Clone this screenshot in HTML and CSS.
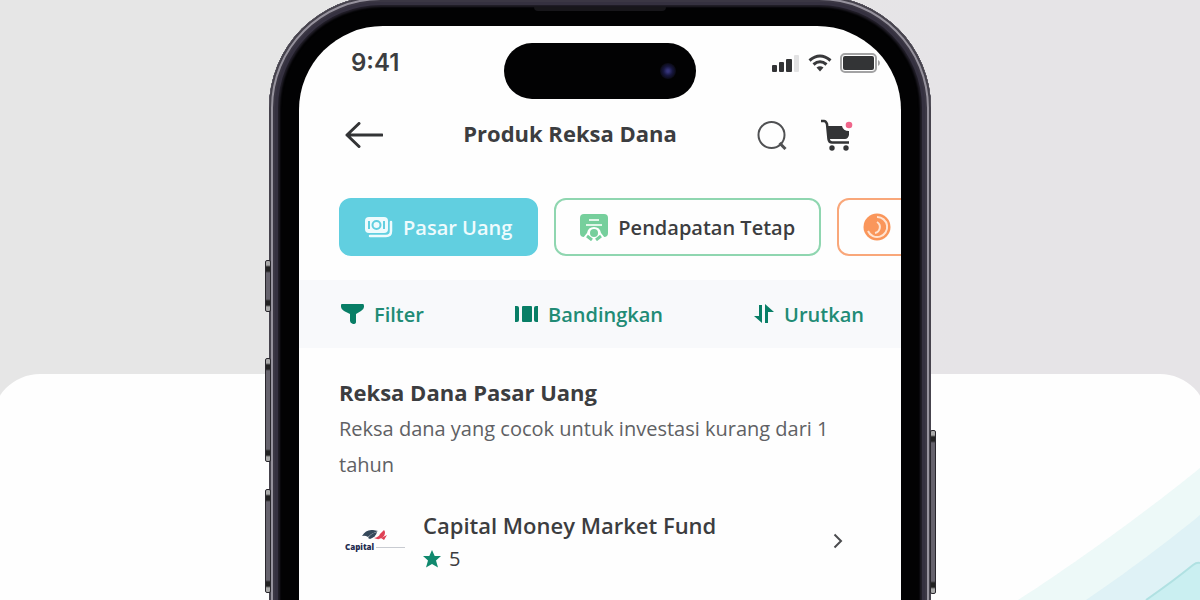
FILE: index.html
```html
<!DOCTYPE html>
<html lang="id">
<head>
  <meta charset="UTF-8">
  <meta name="viewport" content="width=device-width, initial-scale=1.0">
  <title>Produk Reksa Dana</title>
  <link rel="stylesheet" href="styles.css">
</head>
<body>
  <div class="hero">
    <!-- Background panel and waves -->
    <div class="panel"></div>
    <svg class="waves" width="190" height="140" viewBox="0 0 190 140" aria-hidden="true">
      <path d="M8 140C48 115 134 54 190 8V140Z" fill="#edf9f8"/>
      <path d="M76 140C112 116 165 76 190 55V140Z" fill="#dff2f6"/>
      <path d="M136 140Q162 122 183 105Q187 102 190 103V140Z" fill="#caeff1"/>
      <path d="M136 140Q162 122 183 105Q187 102 190 103" fill="none" stroke="#b0e1e2" stroke-width="2"/>
    </svg>

    <!-- Phone -->
    <div class="phone">
      <span class="side-button mute"></span>
      <span class="side-button volume-up"></span>
      <span class="side-button volume-down"></span>
      <span class="side-button power"></span>
      <span class="speaker"></span>

      <main class="screen">
        <div class="status-bar">
          <span class="time">9:41</span>
          <div class="island"><span class="camera"></span></div>
          <div class="status-icons">
            <svg width="28" height="18" viewBox="0 0 28 18" aria-hidden="true">
              <g fill="#333436">
                <rect x="0" y="11" width="5" height="7" rx="1"/>
                <rect x="7" y="8" width="5" height="10" rx="1"/>
                <rect x="14" y="5" width="6" height="13" rx="1"/>
              </g>
              <rect x="22" y="1" width="5" height="17" rx="1" fill="#e2e2e3"/>
            </svg>
            <svg width="24" height="18" viewBox="0 0 24 18" aria-hidden="true">
              <path d="M1.5 6.5Q12-2.5 22.5 6.5" fill="none" stroke="#38393b" stroke-width="3"/>
              <path d="M5.5 10.5Q12 5 18.5 10.5" fill="none" stroke="#38393b" stroke-width="3"/>
              <path d="M8.5 13.5Q12 11 15.5 13.5L12 17.5Z" fill="#38393b"/>
            </svg>
            <svg width="41" height="20" viewBox="0 0 41 20" aria-hidden="true">
              <rect x="1" y="1" width="35" height="18" rx="4" fill="#fff" stroke="#a3a3a4" stroke-width="2"/>
              <rect x="3" y="3" width="31" height="14" rx="2" fill="#333436"/>
              <path d="M38 7Q40 8 40 10T38 13Z" fill="#a3a3a4"/>
            </svg>
          </div>
        </div>

        <header class="app-bar">
          <button type="button" class="icon-button" aria-label="Kembali">
            <svg width="38" height="26" viewBox="0 0 38 26">
              <path d="M37 13H2M14 1.5L2 13L14 24.5" fill="none" stroke="#333436" stroke-width="3" stroke-linejoin="round" stroke-linecap="round"/>
            </svg>
          </button>
          <h1>Produk Reksa Dana</h1>
          <div class="actions">
            <button type="button" class="icon-button" aria-label="Cari">
              <svg width="30" height="30" viewBox="0 0 30 30">
                <circle cx="14.5" cy="15" r="13" fill="none" stroke="#505153" stroke-width="2"/>
                <path d="M22.5 23L28.5 29" stroke="#505153" stroke-width="3"/>
              </svg>
            </button>
            <button type="button" class="icon-button" aria-label="Keranjang">
              <svg width="32" height="32" viewBox="0 0 32 32">
                <path d="M0 2H3Q5 2 6 5L7.500 20Q8 23.500 11 23.500H28" fill="none" stroke="#333436" stroke-width="2.5"/>
                <path d="M6 7H21Q22 12 28 12V16Q27 20 24 20H8Z" fill="#333436"/>
                <circle cx="11" cy="29" r="2.7" fill="#333436"/>
                <circle cx="25" cy="29" r="2.7" fill="#333436"/>
                <circle cx="28" cy="6" r="3.3" fill="#f0668b"/>
              </svg>
            </button>
          </div>
        </header>

        <nav class="chips">
          <button type="button" class="chip active">
            <svg width="28" height="22" viewBox="0 0 28 22" aria-hidden="true">
              <path d="M26 6V15Q26 20 21 20H5" fill="none" stroke="#eefbfd" stroke-width="2.5" stroke-linecap="round"/>
              <rect x="0" y="1" width="23" height="16" rx="4" fill="#eefbfd"/>
              <circle cx="11.5" cy="9" r="4" fill="none" stroke="#61cfe0" stroke-width="2"/>
              <path d="M4 5V13M19 5V13" stroke="#61cfe0" stroke-width="2"/>
            </svg>
            Pasar Uang
          </button>
          <button type="button" class="chip green">
            <svg width="28" height="28" viewBox="0 0 28 28" aria-hidden="true">
              <path d="M4 1H24Q28 1 28 5V20Q28 24 24 24H4Q0 24 0 20V5Q0 1 4 1Z" fill="#76cf9c"/>
              <path d="M9 7H19M6 12H22" stroke="#e1f6e9" stroke-width="2"/>
              <path d="M14 14Q20 14 21 20L25 25L21 28H7L3 25L7 20Q8 14 14 14Z" fill="#fff"/>
              <circle cx="14" cy="20" r="4" fill="#76cf9c"/>
              <path d="M7 23L12 27M21 23L16 27" stroke="#76cf9c" stroke-width="3"/>
            </svg>
            Pendapatan Tetap
          </button>
          <button type="button" class="chip orange" aria-label="Campuran">
            <svg width="28" height="28" viewBox="0 0 28 28" aria-hidden="true">
              <circle cx="14" cy="14" r="13.5" fill="#fa965b"/>
              <path d="M14 4A10 10 0 1 1 5 18" fill="none" stroke="#ffe3d1" stroke-width="2"/>
              <path d="M14 9A6 6 0 0 1 12 20" fill="none" stroke="#ffe3d1" stroke-width="2"/>
            </svg>
            C
          </button>
        </nav>

        <div class="toolbar">
          <button type="button">
            <svg width="23" height="20" viewBox="0 0 23 20" aria-hidden="true">
              <path d="M1 0H22Q23 0 23 2V3Q23 5 20 7L15 10V18Q15 20 12 20Q9 19 9 17V10L3 7Q0 5 0 3V1Q0 0 1 0Z" fill="#087e66"/>
            </svg>
            Filter
          </button>
          <button type="button">
            <svg width="23" height="16" viewBox="0 0 23 16" aria-hidden="true">
              <path d="M0 0H2Q4 0 4 2V14Q4 16 2 16H0Z" fill="#087e66"/>
              <rect x="7" y="0" width="10" height="16" rx="1" fill="#087e66"/>
              <path d="M23 0H21Q19 0 19 2V14Q19 16 21 16H23Z" fill="#087e66"/>
            </svg>
            Bandingkan
          </button>
          <button type="button">
            <svg width="20" height="20" viewBox="0 0 20 20" aria-hidden="true">
              <path d="M5 1H8V19L0 12H5ZM11 19V0L20 8H14V19Z" fill="#087e66"/>
            </svg>
            Urutkan
          </button>
        </div>

        <section class="products">
          <h2>Reksa Dana Pasar Uang</h2>
          <p class="description">Reksa dana yang cocok untuk investasi kurang dari 1 tahun</p>

          <a href="#capital" class="fund">
            <div class="fund-logo">
              <svg width="26" height="12" viewBox="0 0 26 12" aria-hidden="true">
                <path d="M0 7Q4 0 11 1L16 2Q10 4 6 8Q3 6 0 7Z" fill="#35485a"/>
                <path d="M6 9Q9 4 15 3Q14 8 8 10Z" fill="#35485a"/>
                <path d="M12 9Q17 8 18 5L22 1Q24 3 22 7Q18 12 12 9Z" fill="#df4054"/>
                <path d="M19 9L25 6L22 11Z" fill="#df4054"/>
              </svg>
              <div class="fund-brand">Capital<span></span></div>
            </div>
            <div class="fund-info">
              <h3>Capital Money Market Fund</h3>
              <div class="rating">
                <svg width="18" height="18" viewBox="0 0 18 18" aria-hidden="true">
                  <path d="M9 0L11.7 6H18L13 10.5L15 17.5L9 14L3 17.5L5 10.5L0 6H6.3Z" fill="#10896e"/>
                </svg>
                5
              </div>
            </div>
            <svg width="10" height="16" viewBox="0 0 10 16" aria-hidden="true">
              <path d="M1.5 1.5L8 8L1.5 14.5" fill="none" stroke="#4b4c4f" stroke-width="2"/>
            </svg>
          </a>
        </section>
      </main>
    </div>
  </div>
</body>
</html>
```
FILE: styles.css
```css
* {
  margin: 0;
  padding: 0;
  box-sizing: border-box;
}

body {
  font-family: "Open Sans", "Noto Sans", sans-serif;
  color: #3c3d40;
  background: #e6e6e6;
}

button {
  border: none;
  background: none;
  font: inherit;
  color: inherit;
  cursor: pointer;
}

svg {
  display: block;
  flex-shrink: 0;
}

.hero {
  position: relative;
  height: 100vh;
  overflow: hidden;
  background: linear-gradient(90deg, #e6e6e6 50%, #e6e4e7 80%);
}

/* Background */
.panel {
  position: absolute;
  top: 374px;
  right: -8px;
  bottom: 0;
  left: -8px;
  background: #fefefe;
  border-radius: 48px 48px 0 0;
}

.waves {
  position: absolute;
  right: 0;
  bottom: 0;
}

/* Phone frame */
.phone {
  position: relative;
  width: 100%;
  max-width: 662px;
  min-height: 110vh;
  margin: -4px auto 0;
  padding: 30px 30px 0;
  background: #020203;
  border-radius: 112px 112px 0 0;
  box-shadow:
    inset 0 0 0 2px #46434d,
    inset 0 0 0 4px #96929d,
    inset 0 0 0 6px #3b3744,
    inset 0 0 0 9px #353140,
    inset 0 0 2px 11px #211e28;
}

.side-button {
  position: absolute;
  left: -4px;
  width: 6px;
  height: 104px;
  border: 1px solid #29272d;
  border-radius: 2px;
  background: linear-gradient(#aaa 4px, #222 6px, #222 10px, #66636d 12px, #66636d calc(100% - 12px), #222 calc(100% - 10px), #222 calc(100% - 6px), #aaa calc(100% - 4px));
}

.mute {
  top: 264px;
  height: 52px;
}

.volume-up {
  top: 362px;
}

.volume-down {
  top: 493px;
}

.power {
  top: 434px;
  right: -5px;
  left: auto;
  height: 164px;
}

.speaker {
  position: absolute;
  top: 11px;
  left: 50%;
  width: 132px;
  height: 4px;
  margin-left: -66px;
  border-radius: 0 0 4px 4px;
  background: #17161a;
}

.screen {
  min-height: 110vh;
  overflow: hidden;
  background: #fefefe;
  border-radius: 84px 84px 0 0;
}

/* Status bar */
.status-bar {
  display: grid;
  grid-template-columns: 1fr auto 1fr;
  padding: 17px 20px 0;
}

.time {
  padding-left: 32px;
  font-family: Inter, sans-serif;
  font-size: 24px;
  font-weight: 600;
  line-height: 40px;
}

.island {
  display: flex;
  align-items: center;
  justify-content: flex-end;
  width: 192px;
  height: 56px;
  padding-right: 20px;
  background: #020203;
  border-radius: 28px;
}

.camera {
  width: 16px;
  height: 16px;
  border-radius: 50%;
  background: radial-gradient(circle, #35347a 10%, #17173f 40%, #08080e 75%);
}

.status-icons {
  display: flex;
  align-items: center;
  justify-content: flex-end;
  gap: 8px;
  height: 40px;
}

/* App bar */
.app-bar {
  display: flex;
  align-items: center;
  height: 72px;
  padding: 0 48px 0 46px;
}

.app-bar h1 {
  flex: 1;
  padding-bottom: 4px;
  font-size: 22px;
  font-weight: 700;
  line-height: 28px;
  text-align: center;
}

.actions {
  display: flex;
  gap: 34px;
}

/* Category chips */
.chips {
  display: flex;
  gap: 16px;
  margin-top: 27px;
  padding-left: 40px;
  overflow: hidden;
}

.chip {
  display: flex;
  flex-shrink: 0;
  align-items: center;
  gap: 10px;
  height: 58px;
  padding: 0 24px;
  border: 2px solid #61cfe0;
  border-radius: 12px;
  font-size: 20px;
  font-weight: 600;
  white-space: nowrap;
}

.chip.active {
  background: #61cfe0;
  color: #effbfd;
}

.chip.green {
  border-color: #8fd6b0;
}

.chip.orange {
  border-color: #f9a77a;
}

/* Filter toolbar */
.toolbar {
  display: flex;
  justify-content: space-between;
  margin-top: 24px;
  padding: 0 37px 0 42px;
  background: #f8f9fb;
}

.toolbar button {
  display: flex;
  align-items: center;
  gap: 10px;
  height: 68px;
  color: #218b75;
  font-size: 20px;
  font-weight: 600;
}

/* Product list */
.products {
  padding: 28px 40px;
}

.products h2 {
  font-size: 22px;
  font-weight: 700;
  line-height: 32px;
}

.description {
  margin-top: 3px;
  color: #606164;
  font-size: 20px;
  line-height: 36px;
}

.fund {
  display: flex;
  align-items: center;
  gap: 18px;
  margin-top: 24px;
  padding: 0 18px 0 6px;
  color: inherit;
  text-decoration: none;
}

.fund-logo {
  display: flex;
  flex-direction: column;
  align-items: center;
  width: 60px;
}

.fund-brand {
  display: flex;
  align-items: center;
  gap: 2px;
  width: 100%;
  color: #242c50;
  font-size: 8px;
  font-weight: 800;
  line-height: 12px;
}

.fund-brand span {
  flex: 1;
  height: 1px;
  background: #c8cbd1;
}

.fund-info {
  flex: 1;
}

.fund h3 {
  font-size: 22px;
  font-weight: 600;
  line-height: 36px;
}

.rating {
  display: flex;
  align-items: center;
  gap: 8px;
  font-size: 20px;
  line-height: 32px;
}
```
